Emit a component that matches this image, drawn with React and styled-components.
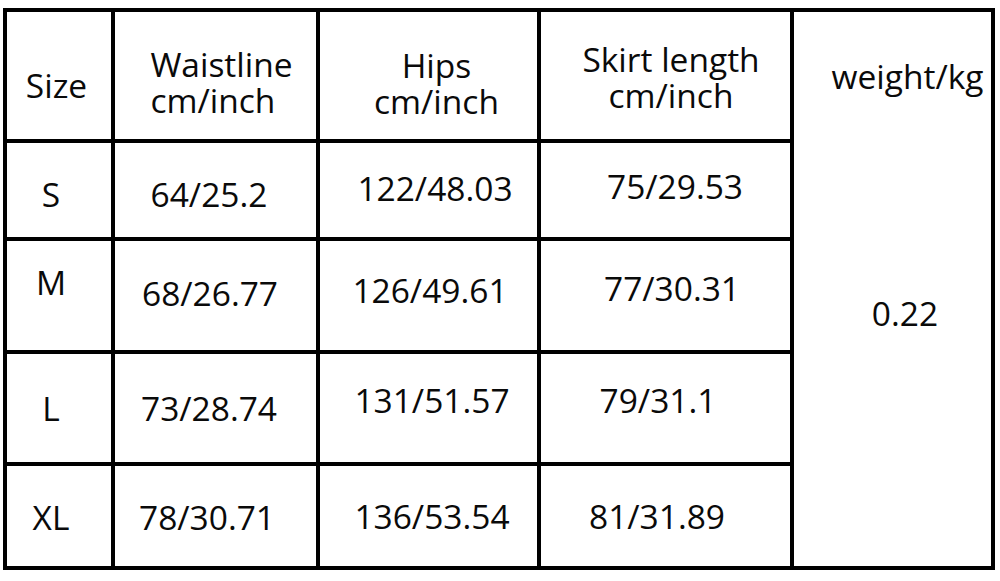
import React from 'react';
import styled, { createGlobalStyle } from 'styled-components';

const GlobalStyle = createGlobalStyle`
  html, body {
    margin: 0;
    padding: 0;
    background: #ffffff;
  }

  body {
    font-family: "Open Sans", "Noto Sans", Arial, sans-serif;
    font-weight: 500;
    color: #0a0a0a;
  }
`;

const Page = styled.div`
  /* Page padding puts the chart where it sits in the picture */
  width: 1000px;
  height: 581px;
  padding: 8px 0 0 3px;
  box-sizing: border-box;
`;

const Chart = styled.div`
  /* The black background shows through the gaps as the rule lines */
  display: grid;
  grid-template-columns: 104px 201px 217px 249px 197px;
  grid-template-rows: 127px 94px 109px 108px 100px;
  gap: 4px;
  padding: 4px;
  width: max-content;
  background: #000;
`;

const Cell = styled.div`
  /* Each cell centres its text, nudged a little like the original */
  display: flex;
  align-items: center;
  justify-content: center;
  background: #fff;
  font-size: 33.5px;
  line-height: 36px;
  white-space: nowrap;
  padding-left: ${p => Math.max(0, (p.$dx || 0) * 2)}px;
  padding-right: ${p => Math.max(0, -(p.$dx || 0) * 2)}px;
  padding-top: ${p => Math.max(0, (p.$dy || 0) * 2)}px;
  padding-bottom: ${p => Math.max(0, -(p.$dy || 0) * 2)}px;
`;

const HeadText = styled.div`
  text-align: ${p => p.$align || 'center'};
`;

const WeightColumn = styled.div`
  /* Weight spans the header and all size rows without inner lines */
  grid-column: 5;
  grid-row: 1 / span 5;
  display: grid;
  grid-template-rows: 127px 1fr;
  background: #fff;
`;

const WeightCell = styled(Cell)`
  background: transparent;
`;

const rows = [
  {
    size: 'S',
    cells: [
      { v: 'S', dx: -8, dy: 4 },
      { v: '64/25.2', dx: -6.5, dy: 4 },
      { v: '122/48.03', dx: 6.5, dy: -2 },
      { v: '75/29.53', dx: 9.5, dy: -4 },
    ],
  },
  {
    size: 'M',
    cells: [
      { v: 'M', dx: -8, dy: -13.5 },
      { v: '68/26.77', dx: -5.5, dy: -2.5 },
      { v: '126/49.61', dx: 1.5, dy: -5.5 },
      { v: '77/30.31', dx: 6.5, dy: -7.5 },
    ],
  },
  {
    size: 'L',
    cells: [
      { v: 'L', dx: -8, dy: 0 },
      { v: '73/28.74', dx: -6.5, dy: 0 },
      { v: '131/51.57', dx: 3.5, dy: -8 },
      { v: '79/31.1', dx: -7.5, dy: -8 },
    ],
  },
  {
    size: 'XL',
    cells: [
      { v: 'XL', dx: -8, dy: 1 },
      { v: '78/30.71', dx: -8.5, dy: 1 },
      { v: '136/53.54', dx: 3.5, dy: 0 },
      { v: '81/31.89', dx: -8.5, dy: 0 },
    ],
  },
];

const App = () => {
  return (
    <Page>
      <GlobalStyle />
      <Chart>
        <Cell $dx={-2.5} $dy={9.5}>Size</Cell>
        <Cell $dx={6} $dy={6}>
          <HeadText $align="left">
            Waistline
            <br />
            cm/inch
          </HeadText>
        </Cell>
        <Cell $dx={8} $dy={7}>
          <HeadText>
            Hips
            <br />
            cm/inch
          </HeadText>
        </Cell>
        <Cell $dx={5.5} $dy={1}>
          <HeadText>
            Skirt length
            <br />
            cm/inch
          </HeadText>
        </Cell>

        <WeightColumn>
          <WeightCell $dx={15} $dy={0.5}>weight/kg</WeightCell>
          <WeightCell $dx={12.5} $dy={-39.5}>0.22</WeightCell>
        </WeightColumn>

        {rows.map(row =>
          row.cells.map((c, i) => (
            <Cell key={row.size + i} $dx={c.dx} $dy={c.dy}>
              {c.v}
            </Cell>
          ))
        )}
      </Chart>
    </Page>
  );
};

export default App;
